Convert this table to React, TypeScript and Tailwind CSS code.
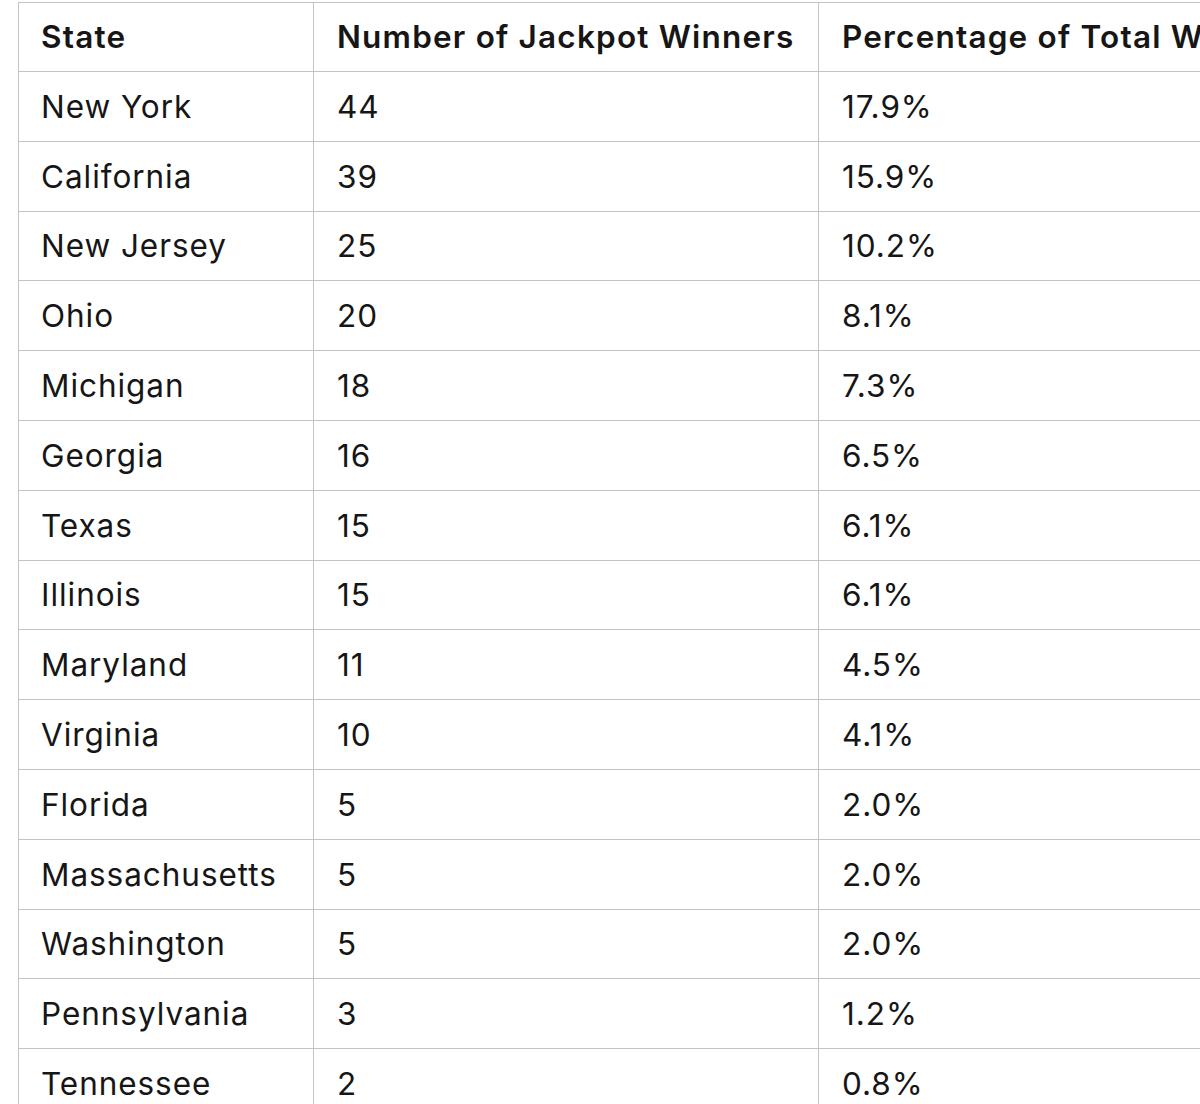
import React from "react";

const rows: [string, string, string][] = [
  ["New York", "44", "17.9%"],
  ["California", "39", "15.9%"],
  ["New Jersey", "25", "10.2%"],
  ["Ohio", "20", "8.1%"],
  ["Michigan", "18", "7.3%"],
  ["Georgia", "16", "6.5%"],
  ["Texas", "15", "6.1%"],
  ["Illinois", "15", "6.1%"],
  ["Maryland", "11", "4.5%"],
  ["Virginia", "10", "4.1%"],
  ["Florida", "5", "2.0%"],
  ["Massachusetts", "5", "2.0%"],
  ["Washington", "5", "2.0%"],
  ["Pennsylvania", "3", "1.2%"],
  ["Tennessee", "2", "0.8%"],
];

export default function App() {
  return (
    <div
      className="w-[1200px] h-[1104px] overflow-hidden bg-white text-[#161616]"
      style={{ fontFamily: "Inter, 'Noto Sans', sans-serif" }}
    >
      <div className="ml-[18px] mt-[2px] w-[1400px] border-t-[1.5px] border-l-[1.5px] border-[#c4c4c4]">
        <div className="flex h-[69px] border-b-[1.5px] border-[#c4c4c4] text-[31.5px] font-semibold tracking-[0.038em]">
          <div className="w-[295px] shrink-0 flex items-center pl-[22px] border-r-[1.5px] border-[#c4c4c4]">State</div>
          <div className="w-[505px] shrink-0 flex items-center pl-[23px] border-r-[1.5px] border-[#c4c4c4]">Number of Jackpot Winners</div>
          <div className="flex-1 flex items-center pl-[23px] whitespace-nowrap">Percentage of Total Winners</div>
        </div>
        {rows.map(([s, n, p]) => (
          <div key={s} className="flex h-[69.8px] border-b-[1.5px] border-[#c4c4c4] text-[31.5px] font-normal tracking-[0.03em]">
            <div className="w-[295px] shrink-0 flex items-center pl-[22px] border-r-[1.5px] border-[#c4c4c4]">{s}</div>
            <div className="w-[505px] shrink-0 flex items-center pl-[23px] border-r-[1.5px] border-[#c4c4c4]">{n}</div>
            <div className="flex-1 flex items-center pl-[23px]">{p}</div>
          </div>
        ))}
      </div>
    </div>
  );
}
